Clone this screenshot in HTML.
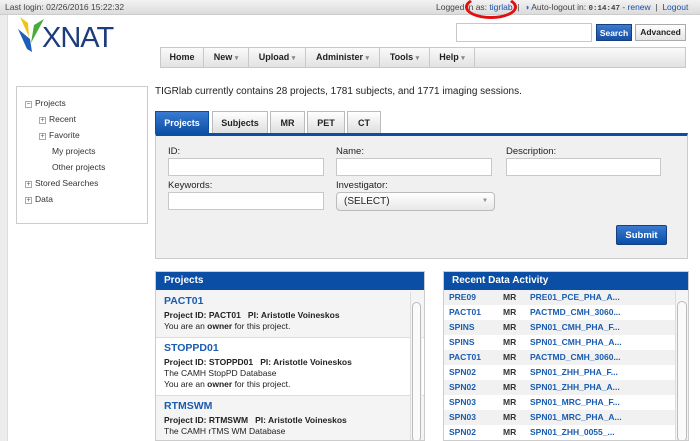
<!DOCTYPE html>
<html><head><meta charset="utf-8"><style>
*{box-sizing:border-box;margin:0;padding:0}
body{width:700px;height:441px;overflow:hidden;font-family:"Liberation Sans",Arial,sans-serif;font-size:9px;color:#222;background:#fff;position:relative}
.a{position:absolute}
a{color:#1a4fa8}
.top{left:0;top:0;width:700px;height:15px;background:linear-gradient(#f2f2f2,#dcdcdc);border-bottom:1px solid #ccc;font-size:8.5px;color:#444}
.inp{background:#fff;border:1px solid #c8c8c8}
.nav{left:160px;top:47px;width:526px;height:21px;background:linear-gradient(#fafafa,#e2e2e2);border:1px solid #c8c8c8;display:flex}
.nav div{height:19px;line-height:19px;font-weight:bold;font-size:9px;border-right:1px solid #c8c8c8;text-align:center}
.nav span{color:#888;font-size:7px}
.tab{top:111px;height:23px;line-height:22px;text-align:center;font-weight:bold;font-size:9px;background:linear-gradient(#fff,#ddd);border:1px solid #bbb;border-bottom:none}
.lbl{font-size:9.5px;color:#222}
.hdr{height:18px;background:#0a4ea6;color:#fff;font-weight:bold;font-size:10px;line-height:18px;padding-left:8px}
.pj{padding:5px 8px;border-bottom:1px solid #ddd;font-size:8.5px;line-height:11px}
.pj .t{color:#1a5cb0;font-weight:bold;font-size:10.5px;margin-bottom:3px}
.row{height:15px;line-height:15px;font-size:8.5px;font-weight:bold;display:flex}
.row:nth-child(odd){background:#f1f1f1}
.row .c1{width:59px;padding-left:5px;color:#1a5cb0}
.row .c2{width:27px;color:#333}
.row .c3{color:#1a5cb0}
.tree{font-size:8.5px;color:#333;line-height:16px}
.box{display:inline-block;width:7px;height:7px;border:1px solid #aaa;font-size:7px;line-height:5px;text-align:center;color:#555;margin-right:3px;background:#fff}
</style></head><body>
<div class="a" style="left:0;top:15px;width:8px;height:426px;background:#ececec;border-right:1px solid #ddd"></div>
<div class="a top"><span class="a" style="left:5px;top:2px">Last login: 02/26/2016 15:22:32</span>
<span class="a" style="left:436px;top:2px">Logged in as: <a>tigrlab</a> &nbsp;|&nbsp; <span style="color:#1a6ed8">◑</span> Auto-logout in: <b style="font-family:'Liberation Mono',monospace;font-size:7.5px">0:14:47</b> - <a>renew</a> &nbsp;|&nbsp; <a>Logout</a></span></div>
<div class="a" style="left:465px;top:-5px;width:52px;height:24px;border:3px solid #e01010;border-radius:50%;border-top-color:transparent"></div>
<svg class="a" style="left:16px;top:15px" width="30" height="38" viewBox="0 0 30 38"><path d="M4 2 L12 8 L13 22 Z" fill="#f2c21a"/><path d="M28 4 L18 10 L15 28 Z" fill="#4aaa3a"/><path d="M2 14 L14 24 L16 37 L11 34 Z" fill="#1b5fb8"/></svg>
<div class="a" style="left:42px;top:22px;font-size:29px;color:#1d3c7e;letter-spacing:-1px;font-family:'Liberation Sans',sans-serif">XNAT</div>
<div class="a inp" style="left:456px;top:23px;width:136px;height:19px"></div>
<div class="a" style="left:596px;top:24px;width:36px;height:17px;background:linear-gradient(#3a7ad0,#174fa0);color:#fff;font-weight:bold;font-size:8.5px;text-align:center;line-height:17px;border:1px solid #153f80">Search</div>
<div class="a" style="left:635px;top:24px;width:51px;height:17px;background:linear-gradient(#fff,#e4e4e4);font-size:8.5px;font-weight:bold;text-align:center;line-height:15px;border:1px solid #aaa">Advanced</div>
<div class="a nav"><div style="width:43px">Home</div><div style="width:45px">New <span>▾</span></div><div style="width:57px">Upload <span>▾</span></div><div style="width:74px">Administer <span>▾</span></div><div style="width:50px">Tools <span>▾</span></div><div style="width:45px">Help <span>▾</span></div></div>
<div class="a tree" style="left:16px;top:86px;width:132px;height:138px;border:1px solid #ccc;padding:8px 0 0 8px">
<div><span class="box">−</span>Projects</div>
<div style="padding-left:14px"><span class="box">+</span>Recent</div>
<div style="padding-left:14px"><span class="box">+</span>Favorite</div>
<div style="padding-left:27px">My projects</div>
<div style="padding-left:27px">Other projects</div>
<div><span class="box">+</span>Stored Searches</div>
<div><span class="box">+</span>Data</div></div>
<div class="a" style="left:155px;top:86px;font-size:10px">TIGRlab currently contains 28 projects, 1781 subjects, and 1771 imaging sessions.</div>
<div class="a tab" style="left:155px;width:54px;background:linear-gradient(#3a7ad0,#0a4ea6);color:#fff;border-color:#0a4ea6">Projects</div>
<div class="a tab" style="left:212px;width:56px">Subjects</div>
<div class="a tab" style="left:270px;width:35px">MR</div>
<div class="a tab" style="left:307px;width:38px">PET</div>
<div class="a tab" style="left:347px;width:34px">CT</div>
<div class="a" style="left:155px;top:133px;width:533px;height:126px;background:#f0f0f0;border:1px solid #ccc;border-top:3px solid #0a4ea6"></div>
<div class="a lbl" style="left:168px;top:146px">ID:</div>
<div class="a lbl" style="left:336px;top:146px">Name:</div>
<div class="a lbl" style="left:506px;top:146px">Description:</div>
<div class="a inp" style="left:168px;top:158px;width:156px;height:18px"></div>
<div class="a inp" style="left:336px;top:158px;width:156px;height:18px"></div>
<div class="a inp" style="left:506px;top:158px;width:155px;height:18px"></div>
<div class="a lbl" style="left:168px;top:180px">Keywords:</div>
<div class="a lbl" style="left:336px;top:180px">Investigator:</div>
<div class="a inp" style="left:168px;top:192px;width:156px;height:18px"></div>
<div class="a" style="left:336px;top:192px;width:159px;height:19px;border:1px solid #bbb;border-radius:4px;background:linear-gradient(#fff,#e8e8e8);font-size:10px;line-height:17px;padding-left:7px">(SELECT)<span style="position:absolute;right:6px;font-size:6px;color:#888">▼</span></div>
<div class="a" style="left:616px;top:225px;width:51px;height:20px;background:linear-gradient(#3a7ad0,#0a4ea6);color:#fff;font-weight:bold;font-size:9.5px;text-align:center;line-height:19px;border:1px solid #153f80;border-radius:2px">Submit</div>
<div class="a" style="left:155px;top:271px;width:270px;height:170px;border:1px solid #ccc;overflow:hidden">
<div class="hdr">Projects</div>
<div class="pj" style="background:#f4f4f4;padding-top:6px"><div class="t">PACT01</div><b>Project ID: PACT01 &nbsp; PI: Aristotle Voineskos</b><br>You are an <b>owner</b> for this project.</div>
<div class="pj"><div class="t">STOPPD01</div><b>Project ID: STOPPD01 &nbsp; PI: Aristotle Voineskos</b><br>The CAMH StopPD Database<br>You are an <b>owner</b> for this project.</div>
<div class="pj" style="background:#f4f4f4"><div class="t">RTMSWM</div><b>Project ID: RTMSWM &nbsp; PI: Aristotle Voineskos</b><br>The CAMH rTMS WM Database</div>
<div class="a" style="left:254px;top:20px;width:12px;height:150px;background:#f4f4f4;border-left:1px solid #ddd"><div style="margin:10px 1px;height:140px;border:1px solid #bbb;border-radius:5px;background:#fafafa"></div></div>
</div>
<div class="a" style="left:443px;top:271px;width:246px;height:170px;border:1px solid #ccc;overflow:hidden">
<div class="hdr">Recent Data Activity</div>
<div>
<div class="row"><span class="c1">PRE09</span><span class="c2">MR</span><span class="c3">PRE01_PCE_PHA_A...</span></div>
<div class="row"><span class="c1">PACT01</span><span class="c2">MR</span><span class="c3">PACTMD_CMH_3060...</span></div>
<div class="row"><span class="c1">SPINS</span><span class="c2">MR</span><span class="c3">SPN01_CMH_PHA_F...</span></div>
<div class="row"><span class="c1">SPINS</span><span class="c2">MR</span><span class="c3">SPN01_CMH_PHA_A...</span></div>
<div class="row"><span class="c1">PACT01</span><span class="c2">MR</span><span class="c3">PACTMD_CMH_3060...</span></div>
<div class="row"><span class="c1">SPN02</span><span class="c2">MR</span><span class="c3">SPN01_ZHH_PHA_F...</span></div>
<div class="row"><span class="c1">SPN02</span><span class="c2">MR</span><span class="c3">SPN01_ZHH_PHA_A...</span></div>
<div class="row"><span class="c1">SPN03</span><span class="c2">MR</span><span class="c3">SPN01_MRC_PHA_F...</span></div>
<div class="row"><span class="c1">SPN03</span><span class="c2">MR</span><span class="c3">SPN01_MRC_PHA_A...</span></div>
<div class="row"><span class="c1">SPN02</span><span class="c2">MR</span><span class="c3">SPN01_ZHH_0055_...</span></div>
</div>
<div class="a" style="left:231px;top:19px;width:13px;height:151px;background:#f4f4f4;border-left:1px solid #ddd"><div style="margin:10px 1px;height:141px;border:1px solid #bbb;border-radius:5px;background:#fafafa"></div></div>
</div>
</body></html>
